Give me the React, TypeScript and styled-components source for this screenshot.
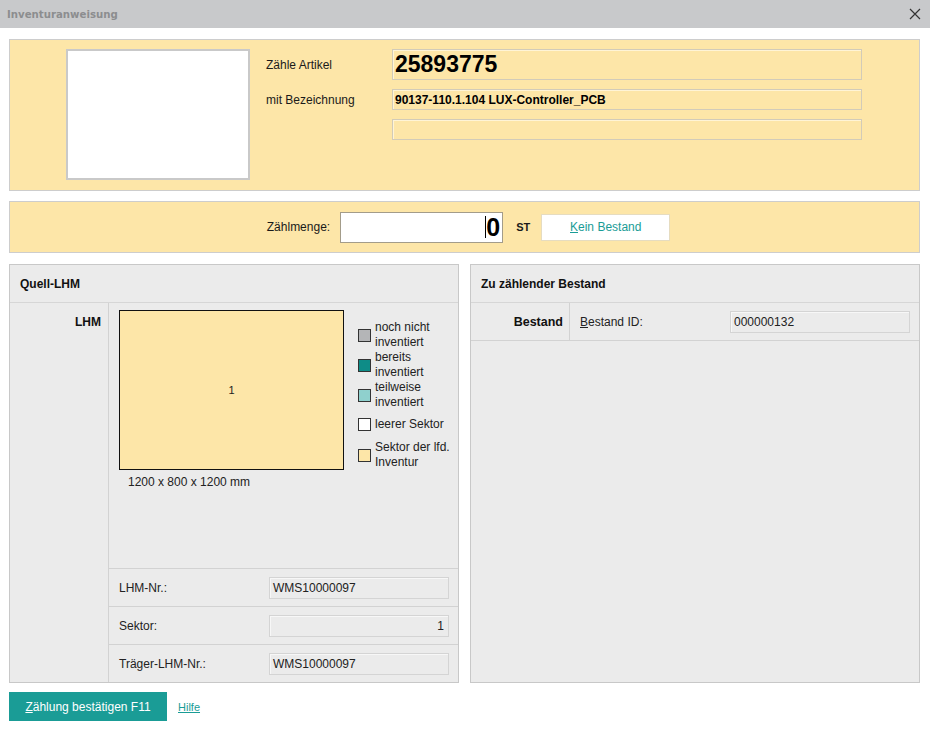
import React from "react";
import styled, { createGlobalStyle } from "styled-components";

const Global = createGlobalStyle`
  html, body { margin: 0; padding: 0; background: #ffffff; }
  body { font-family: "Liberation Sans", Arial, sans-serif; font-size: 12px; color: #1a1a1a; }
  * { box-sizing: border-box; }
`;

const YELLOW = "#fde6a8";
const TEAL = "#1a9c96";
const PANEL = "#ebebeb";

const Window = styled.div`
  width: 930px;
  height: 730px;
  display: flex;
  flex-direction: column;
  background: #fff;
`;

const TitleBar = styled.div`
  height: 28px;
  background: #c8c9cb;
  display: flex;
  align-items: center;
  justify-content: space-between;
  padding: 0 8px 0 7px;
`;

const Title = styled.div`
  font-family: "DejaVu Sans", Verdana, sans-serif;
  font-weight: bold;
  font-size: 10.2px;
  color: #8c8d8f;
`;

const CloseBtn = styled.div`
  width: 14px;
  height: 14px;
  display: flex;
  align-items: center;
  justify-content: center;
`;

const Content = styled.div`
  padding: 11px 10px 0 9px;
  display: flex;
  flex-direction: column;
`;

const YellowPanel = styled.div<{ $h: number }>`
  height: ${(p) => p.$h}px;
  background: ${YELLOW};
  border: 1px solid #cdcdcd;
`;

const ArticlePanel = styled(YellowPanel)`
  display: flex;
  align-items: flex-start;
  padding: 9px 0 0 56px;
`;

const ImageBox = styled.div`
  width: 184px;
  height: 131px;
  background: #fff;
  border: 2px solid #c9c9c9;
`;

const ArticleGrid = styled.div`
  margin-left: 16px;
  display: grid;
  grid-template-columns: 126px 470px;
  grid-template-rows: 31px 21px 21px;
  row-gap: 9px;
  align-items: center;
`;

const Label = styled.div`
  font-size: 12px;
  color: #1a1a1a;
`;

const InfoField = styled.div<{ $big?: boolean }>`
  height: 100%;
  border: 1px solid #d2cbb8;
  box-shadow: inset 1px 1px 0 #fff4d6;
  background: ${YELLOW};
  display: flex;
  align-items: center;
  padding-left: 2px;
  font-weight: bold;
  font-size: ${(p) => (p.$big ? "23px" : "12px")};
  color: #000;
`;

const CountPanel = styled(YellowPanel)`
  margin-top: 10px;
  display: flex;
  align-items: center;
  justify-content: center;
  padding-left: 8px;
`;

const CountLabel = styled.div`
  font-size: 12px;
  margin-right: 10px;
  color: #1a1a1a;
`;

const CountInput = styled.div`
  width: 163px;
  height: 31px;
  background: #fff;
  border: 1px solid #a39c8a;
  display: flex;
  align-items: center;
  justify-content: flex-end;
  padding-right: 2px;
  font-weight: bold;
  font-size: 25px;
  color: #000;
`;

const Caret = styled.span`
  display: inline-block;
  width: 1px;
  height: 22px;
  background: #000;
`;

const Unit = styled.div`
  font-weight: bold;
  font-size: 11px;
  margin: 0 11px 0 13px;
  color: #1a1a1a;
`;

const GhostButton = styled.div`
  width: 129px;
  height: 27px;
  background: #fff;
  border: 1px solid #e6dcc0;
  display: flex;
  align-items: center;
  justify-content: center;
  color: ${TEAL};
  font-size: 12px;
`;

const Mnemonic = styled.span`
  text-decoration: underline;
`;

const Columns = styled.div`
  margin-top: 11px;
  display: flex;
  gap: 11px;
`;

const Panel = styled.div`
  width: 450px;
  height: 419px;
  background: ${PANEL};
  border: 1px solid #c8c8c8;
  display: flex;
  flex-direction: column;
`;

const PanelHeader = styled.div`
  height: 38px;
  flex: none;
  border-bottom: 1px solid #d6d6d6;
  display: flex;
  align-items: center;
  padding-left: 10px;
  font-weight: bold;
  font-size: 12px;
  color: #111;
`;

const PanelBody = styled.div`
  flex: 1;
  display: flex;
`;

const SideLabel = styled.div`
  width: 99px;
  flex: none;
  border-right: 1px solid #d2d2d2;
  text-align: right;
  padding: 12px 7px 0 0;
  font-weight: bold;
  font-size: 12px;
  color: #111;
`;

const MainCol = styled.div`
  flex: 1;
  display: flex;
  flex-direction: column;
`;

const DiagramArea = styled.div`
  flex: 1;
  display: flex;
  align-items: flex-start;
  padding: 7px 0 0 10px;
`;

const DiagramBlock = styled.div`
  display: flex;
  flex-direction: column;
`;

const Pallet = styled.div`
  width: 225px;
  height: 160px;
  background: ${YELLOW};
  border: 1px solid #111;
  display: flex;
  align-items: center;
  justify-content: center;
  font-size: 11px;
  color: #222;
`;

const Caption = styled.div`
  margin: 5px 0 0 9px;
  line-height: 15px;
  font-size: 12px;
  color: #222;
`;

const Legend = styled.div`
  margin: 10px 0 0 14px;
  display: flex;
  flex-direction: column;
`;

const LegendItem = styled.div<{ $space?: number }>`
  display: flex;
  align-items: center;
  gap: 4px;
  margin-top: ${(p) => p.$space ?? 0}px;
  line-height: 15px;
  font-size: 12px;
  color: #222;
`;

const Swatch = styled.div<{ $c: string }>`
  width: 13px;
  height: 13px;
  flex: none;
  background: ${(p) => p.$c};
  border: 1px solid #333;
`;

const FieldRow = styled.div`
  height: 38px;
  flex: none;
  border-top: 1px solid #d2d2d2;
  display: flex;
  align-items: center;
  padding: 0 9px 0 10px;
`;

const FieldLabel = styled.div<{ $w: number }>`
  width: ${(p) => p.$w}px;
  flex: none;
  font-size: 12px;
  color: #222;
`;

const ReadField = styled.div<{ $right?: boolean }>`
  width: 180px;
  height: 22px;
  border: 1px solid #d4d4d4;
  box-shadow: inset 1px 1px 0 #f7f7f7;
  background: ${PANEL};
  display: flex;
  align-items: center;
  justify-content: ${(p) => (p.$right ? "flex-end" : "flex-start")};
  padding: 0 4px 0 3px;
  font-size: 12px;
  color: #222;
`;

const StockRow = styled.div`
  height: 38px;
  display: flex;
  border-bottom: 1px solid #d2d2d2;
`;

const StockSide = styled.div`
  width: 99px;
  flex: none;
  border-right: 1px solid #d2d2d2;
  display: flex;
  align-items: center;
  justify-content: flex-end;
  padding-right: 6px;
  font-weight: bold;
  font-size: 12.5px;
  color: #111;
`;

const StockMain = styled.div`
  flex: 1;
  display: flex;
  align-items: center;
  padding: 0 9px 0 10px;
`;

const Footer = styled.div`
  margin-top: 9px;
  display: flex;
  align-items: center;
  gap: 11px;
`;

const PrimaryButton = styled.div`
  width: 158px;
  height: 29px;
  background: ${TEAL};
  color: #fff;
  display: flex;
  align-items: center;
  justify-content: center;
  font-size: 12px;
`;

const HelpLink = styled.a`
  color: ${TEAL};
  font-size: 11px;
  text-decoration: underline;
`;

const legend = [
  { c: "#b4b5b7", t: ["noch nicht", "inventiert"], s: 0 },
  { c: "#0e8c87", t: ["bereits", "inventiert"], s: 0 },
  { c: "#8fd0cd", t: ["teilweise", "inventiert"], s: 0 },
  { c: "#ffffff", t: ["leerer Sektor"], s: 7 },
  { c: YELLOW, t: ["Sektor der lfd.", "Inventur"], s: 8 },
];

export default function App() {
  return (
    <Window>
      <Global />
      <TitleBar>
        <Title>Inventuranweisung</Title>
        <CloseBtn>
          <svg width="12" height="12" viewBox="0 0 12 12">
            <path d="M1 1 L11 11 M11 1 L1 11" stroke="#333" strokeWidth="1.2" fill="none" />
          </svg>
        </CloseBtn>
      </TitleBar>
      <Content>
        <ArticlePanel $h={152}>
          <ImageBox />
          <ArticleGrid>
            <Label>Zähle Artikel</Label>
            <InfoField $big>25893775</InfoField>
            <Label>mit Bezeichnung</Label>
            <InfoField>90137-110.1.104 LUX-Controller_PCB</InfoField>
            <span />
            <InfoField />
          </ArticleGrid>
        </ArticlePanel>

        <CountPanel $h={52}>
          <CountLabel>Zählmenge:</CountLabel>
          <CountInput>
            <Caret />0
          </CountInput>
          <Unit>ST</Unit>
          <GhostButton>
            <span>
              <Mnemonic>K</Mnemonic>ein Bestand
            </span>
          </GhostButton>
        </CountPanel>

        <Columns>
          <Panel>
            <PanelHeader>Quell-LHM</PanelHeader>
            <PanelBody>
              <SideLabel>LHM</SideLabel>
              <MainCol>
                <DiagramArea>
                  <DiagramBlock>
                    <Pallet>1</Pallet>
                    <Caption>1200 x 800 x 1200 mm</Caption>
                  </DiagramBlock>
                  <Legend>
                    {legend.map((l, i) => (
                      <LegendItem key={i} $space={l.s}>
                        <Swatch $c={l.c} />
                        <div>
                          {l.t.map((line, j) => (
                            <div key={j}>{line}</div>
                          ))}
                        </div>
                      </LegendItem>
                    ))}
                  </Legend>
                </DiagramArea>
                <FieldRow>
                  <FieldLabel $w={150}>LHM-Nr.:</FieldLabel>
                  <ReadField>WMS10000097</ReadField>
                </FieldRow>
                <FieldRow>
                  <FieldLabel $w={150}>Sektor:</FieldLabel>
                  <ReadField $right>1</ReadField>
                </FieldRow>
                <FieldRow>
                  <FieldLabel $w={150}>Träger-LHM-Nr.:</FieldLabel>
                  <ReadField>WMS10000097</ReadField>
                </FieldRow>
              </MainCol>
            </PanelBody>
          </Panel>

          <Panel>
            <PanelHeader>Zu zählender Bestand</PanelHeader>
            <StockRow>
              <StockSide>Bestand</StockSide>
              <StockMain>
                <FieldLabel $w={150}>
                  <Mnemonic>B</Mnemonic>estand ID:
                </FieldLabel>
                <ReadField>000000132</ReadField>
              </StockMain>
            </StockRow>
          </Panel>
        </Columns>

        <Footer>
          <PrimaryButton>
            <span>
              <Mnemonic>Z</Mnemonic>ählung bestätigen F11
            </span>
          </PrimaryButton>
          <HelpLink>Hilfe</HelpLink>
        </Footer>
      </Content>
    </Window>
  );
}
